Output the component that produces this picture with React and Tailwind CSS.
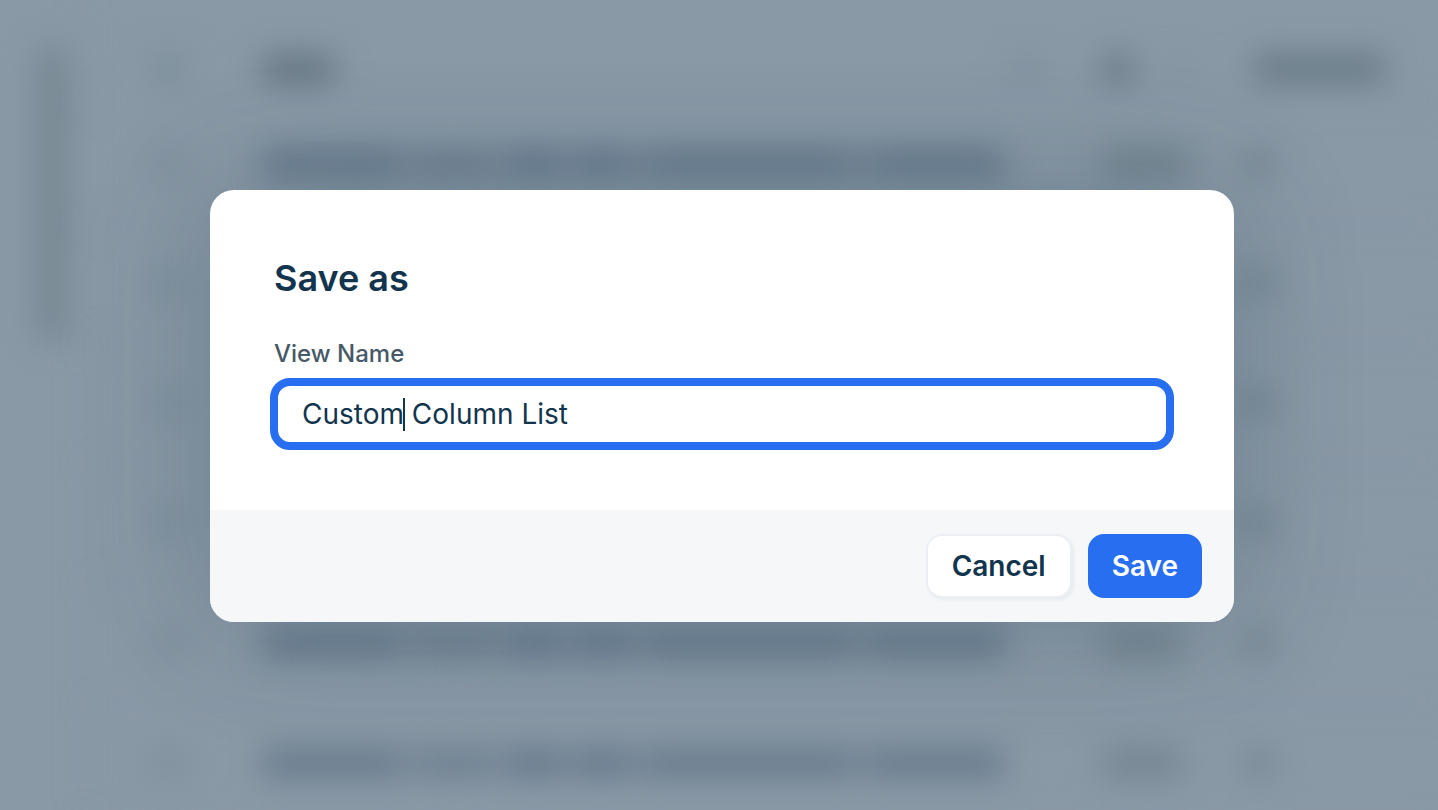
import React, { useState } from 'react';

const rows = [
  { id: 1, count: 'w-[88px]' },
  { id: 2, count: 'w-[84px]' },
  { id: 3, count: 'w-[84px]' },
  { id: 4, count: 'w-[84px]' },
  { id: 5, count: 'w-[80px]' },
  { id: 6, count: 'w-[80px]' },
];

// Muted table shown out of focus behind the dialog
function Backdrop() {
  return (
    <div aria-hidden="true" className="absolute inset-0 flex overflow-hidden bg-[#8a99a6]">
      <div className="flex w-[84px] shrink-0 justify-end border-r-2 border-[#8595a2] pr-4 pt-12 blur-[16px]">
        <div className="h-[292px] w-7 bg-[#74858f]" />
      </div>

      <div className="min-w-0 flex-1 blur-[16px]">
        <div className="flex h-[104px] items-center border-b-2 border-[#8292a0] pt-9">
          <div className="w-[178px] shrink-0 pl-16">
            <div className="size-10 rounded-lg bg-[#7f919e]" />
          </div>
          <div className="flex flex-1 items-center justify-between pr-[58px]">
            <div className="h-7 w-[72px] bg-[#61747f]" />
            <div className="size-7 rounded-full bg-[#7c8d9b]" />
          </div>
          <div className="flex w-[147px] shrink-0 items-center gap-10 pl-1">
            <div className="h-7 w-8 bg-[#667884]" />
            <div className="size-5 rounded-full bg-[#7c8d9b]" />
          </div>
          <div className="w-[193px] shrink-0 pl-2">
            <div className="h-7 w-[132px] bg-[#667984]" />
          </div>
        </div>

        {rows.map((row) => (
          <div key={row.id} className="flex h-[120px] items-center border-b-2 border-[#8595a2]">
            <div className="w-[178px] shrink-0 pl-[66px]">
              <div className="size-9 rounded-lg bg-[#80919e]" />
            </div>
            <div className="flex h-7 flex-1 gap-2">
              <div className="w-[142px] bg-[#65788a]" />
              <div className="w-[84px] bg-[#6b7d8e]" />
              <div className="w-[60px] bg-[#63768a]" />
              <div className="w-[60px] bg-[#63768a]" />
              <div className="w-[216px] bg-[#65788a]" />
              <div className="w-[140px] bg-[#65788a]" />
            </div>
            <div className="w-[147px] shrink-0 pl-1">
              <div className={`h-7 ${row.count} bg-[#72838e]`} />
            </div>
            <div className="w-[193px] shrink-0">
              <div className="size-7 rounded-full bg-[#6f818c]" />
            </div>
          </div>
        ))}
      </div>
    </div>
  );
}

function SaveAsDialog() {
  const [name, setName] = useState('Custom Column List');

  return (
    <form
      role="dialog"
      aria-labelledby="dialog-title"
      onSubmit={(e) => e.preventDefault()}
      className="relative w-full max-w-[1024px] overflow-hidden rounded-3xl bg-white text-[#12344d] shadow-[0_0_128px_rgba(18,52,77,0.24)]"
    >
      <div className="px-16 pt-16 pb-15">
        <h1 id="dialog-title" className="text-[36px] leading-12 font-semibold">
          Save as
        </h1>
        <label htmlFor="view-name" className="mt-9 block text-2xl leading-8 font-medium text-[#475867]">
          View Name
        </label>
        <div className="relative -mx-1 mt-2">
          <input
            id="view-name"
            type="text"
            value={name}
            onChange={(e) => setName(e.target.value)}
            className="block h-[72px] w-full rounded-[20px] border-8 border-[#276ef1] bg-white px-6 text-[28px] leading-10 outline-none"
          />
          <span aria-hidden="true" className="absolute top-5 left-[133px] h-[33px] w-0.5 bg-[#12344d]" />
        </div>
      </div>

      <div className="flex justify-end gap-4 bg-[#f5f7f9] px-8 py-6">
        <button
          type="button"
          className="h-16 rounded-2xl border-2 border-[#ebeff3] bg-white px-6 text-[28px] leading-10 font-semibold shadow-[2px_2px_4px_rgba(18,52,77,0.06)]"
        >
          Cancel
        </button>
        <button type="submit" className="h-16 rounded-2xl bg-[#276ef1] px-6 text-[28px] leading-10 font-semibold text-white">
          Save
        </button>
      </div>
    </form>
  );
}

export default function App() {
  return (
    <div className="relative flex min-h-screen items-center justify-center overflow-hidden pt-0.5 pl-1.5 font-['Inter',sans-serif]">
      <Backdrop />
      <SaveAsDialog />
    </div>
  );
}
